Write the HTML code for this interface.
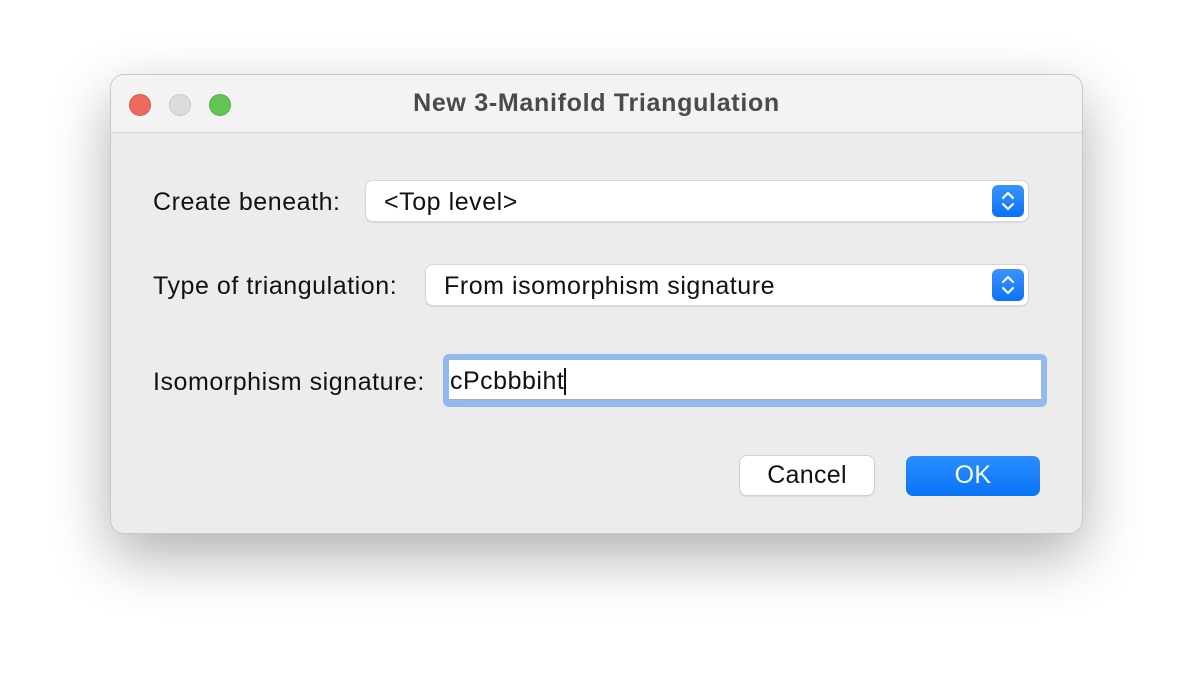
<!DOCTYPE html><html><head><style>
body{margin:0;width:1194px;height:682px;background:#fff;font-family:"Liberation Sans",sans-serif;position:relative;overflow:hidden}
.win{position:absolute;left:111px;top:75px;width:971px;height:458px;border-radius:13px;background:#ececec;box-shadow:0 0 0 1px #c8c8c8,0 22px 60px rgba(0,0,0,.32);overflow:hidden}
.tb{height:57px;background:#f4f3f3;border-bottom:1px solid #d4d4d4;position:relative}
.dot{position:absolute;top:19px;width:22px;height:22px;border-radius:50%;box-sizing:border-box}
.title{position:absolute;left:0;right:0;top:14px;text-align:center;font-weight:bold;font-size:25px;letter-spacing:.7px;color:#4a4a4a}
.a{position:absolute}
.lbl{font-size:25px;letter-spacing:.55px;color:#111}
.pop{background:#fff;border-radius:7px;box-shadow:0 0 0 1px #d6d6d6,0 1px 2px rgba(0,0,0,.2);font-size:25px;letter-spacing:.55px;color:#111;box-sizing:border-box;padding-left:18px;line-height:42px}
.st{position:absolute;right:4px;top:4px;width:32px;height:32px;border-radius:6px;background:linear-gradient(#3a93ff,#0a72f5)}
.btn{border-radius:7px;font-size:25px;letter-spacing:.3px;text-align:center;line-height:39px}
</style></head><body>
<div class="win">
<div class="tb">
<div class="dot" style="left:18px;background:#ed6a5e;border:1px solid #d55448"></div>
<div class="dot" style="left:58px;background:#dcdcdc;border:1px solid #c6c6c6"></div>
<div class="dot" style="left:98px;background:#61c454;border:1px solid #4fae43"></div>
<div class="title">New 3-Manifold Triangulation</div>
</div>
<div class="a lbl" style="left:42px;top:113px">Create beneath:</div>
<div class="a pop" style="left:255px;top:106px;width:662px;height:40px">&lt;Top level&gt;<div class="st"><svg width="32" height="32"><path d="M11 13l5-5 5 5M11 19l5 5 5-5" stroke="#fff" stroke-width="2.2" fill="none" stroke-linecap="round" stroke-linejoin="round"/></svg></div></div>
<div class="a lbl" style="left:42px;top:197px">Type of triangulation:</div>
<div class="a pop" style="left:315px;top:190px;width:602px;height:40px">From isomorphism signature<div class="st"><svg width="32" height="32"><path d="M11 13l5-5 5 5M11 19l5 5 5-5" stroke="#fff" stroke-width="2.2" fill="none" stroke-linecap="round" stroke-linejoin="round"/></svg></div></div>
<div class="a lbl" style="left:42px;top:293px">Isomorphism signature:</div>
<div class="a" style="left:332px;top:279px;width:604px;height:53px;border-radius:6px;background:#93b9ef"></div>
<div class="a" style="left:338px;top:285px;width:592px;height:40px;background:#fff;border-bottom:1px solid #aaa;box-sizing:border-box;font-size:25px;letter-spacing:.5px;line-height:42px;padding-left:1px;color:#111">cPcbbbiht<span style="display:inline-block;width:1.5px;height:27px;background:#111;vertical-align:-6px"></span></div>
<div class="a btn" style="left:629px;top:381px;width:134px;height:39px;background:#fff;box-shadow:0 0 0 1px #d0d0d0,0 1px 2px rgba(0,0,0,.2);color:#111">Cancel</div>
<div class="a btn" style="left:795px;top:381px;width:134px;height:40px;background:linear-gradient(#2a8dff,#0a74f7);color:#fff">OK</div>
</div>
</body></html>
